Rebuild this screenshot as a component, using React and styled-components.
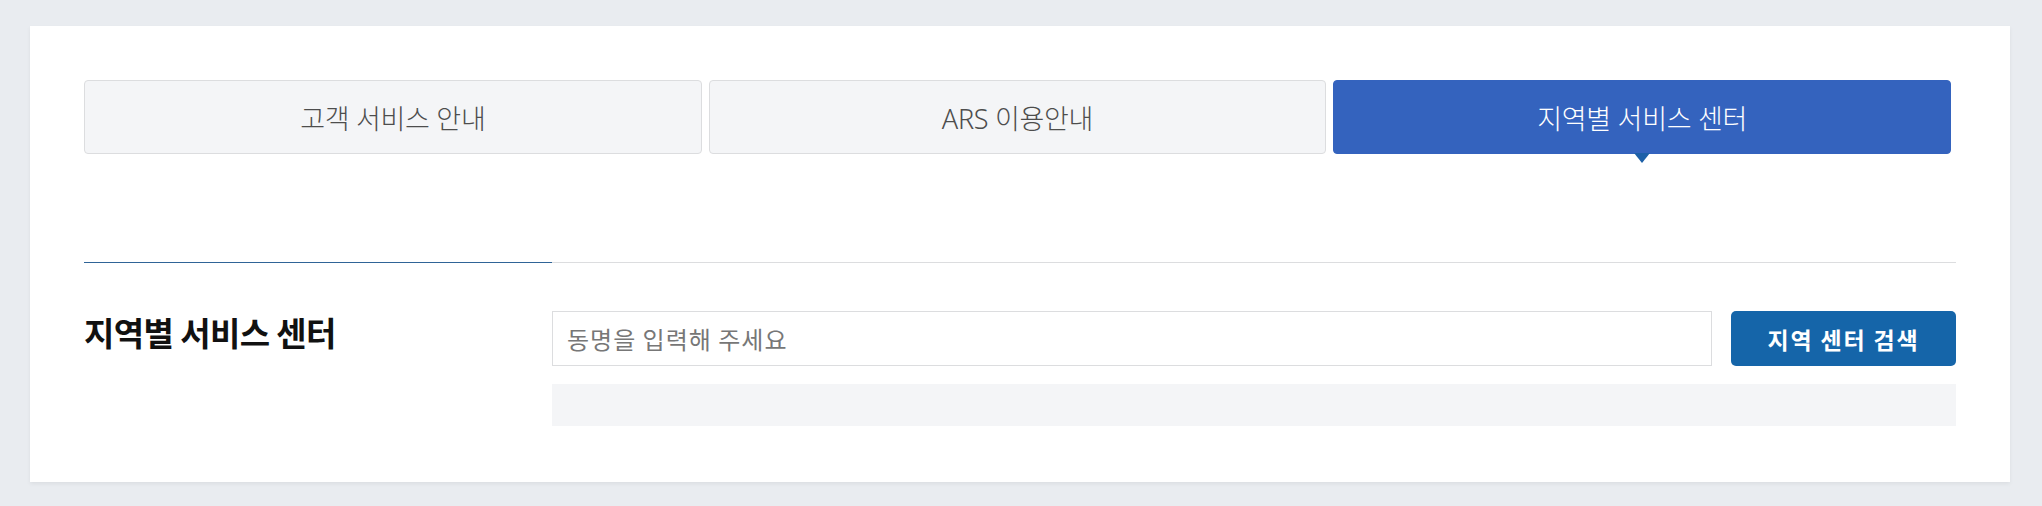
import React, { useState } from 'react'
import styled, { createGlobalStyle } from 'styled-components'

const GlobalStyle = createGlobalStyle`
  html, body {
    margin: 0;
    padding: 0;
    background: #e9ecf0;
    font-family: "Noto Sans", "Noto Sans CJK KR", sans-serif;
  }
  * { box-sizing: border-box; }
`

const Page = styled.div`
  padding: 26px 32px 25px 30px;
`

const Card = styled.section`
  background: #fff;
  padding: 54px 54px 56px 54px;
  box-shadow: 0 2px 4px rgba(0, 0, 0, 0.06);
`

const Tabs = styled.div`
  display: grid;
  grid-template-columns: repeat(3, 1fr);
  gap: 7px;
  margin-right: 5px;
`

const Tab = styled.button`
  position: relative;
  height: 74px;
  border-radius: 4px;
  border: 1px solid ${p => (p.$active ? '#3463be' : '#dcdddf')};
  background: ${p => (p.$active ? '#3463be' : '#f4f5f7')};
  color: ${p => (p.$active ? '#fff' : '#4d4d4d')};
  font-family: "Noto Sans", "Noto Sans CJK KR", sans-serif;
  font-size: 27px;
  font-weight: 300;
  letter-spacing: -0.3px;
  cursor: pointer;

  &::after {
    content: '';
    display: ${p => (p.$active ? 'block' : 'none')};
    position: absolute;
    left: 50%;
    bottom: -10px;
    transform: translateX(-50%);
    border-left: 8px solid transparent;
    border-right: 8px solid transparent;
    border-top: 10px solid #1d60a8;
  }
`

const Section = styled.div`
  display: grid;
  grid-template-columns: 468px 1fr;
  margin-top: 108px;
`

const Side = styled.div`
  border-top: 1px solid #2f6497;
  padding-top: 48px;
`

const Heading = styled.h2`
  margin: 0;
  font-family: "Noto Sans CJK KR", sans-serif;
  font-size: 33px;
  font-weight: 700;
  line-height: 42px;
  letter-spacing: -0.6px;
  color: #111;
`

const Main = styled.div`
  border-top: 1px solid #dcdddf;
  padding-top: 48px;
  display: flex;
  flex-direction: column;
  gap: 18px;
`

const SearchRow = styled.form`
  display: flex;
  gap: 19px;
`

const Input = styled.input`
  flex: 1;
  height: 55px;
  border: 1px solid #dcdddf;
  padding: 0 14px;
  font-family: "Noto Sans CJK KR", sans-serif;
  font-size: 24px;
  letter-spacing: 1px;
  color: #333;
  outline: none;

  &::placeholder {
    color: #777;
  }
`

const SearchButton = styled.button`
  width: 225px;
  height: 55px;
  border: 0;
  border-radius: 5px;
  background: #1565a9;
  color: #fff;
  font-family: "Noto Sans CJK KR", sans-serif;
  font-size: 23px;
  font-weight: 700;
  letter-spacing: 1.8px;
  cursor: pointer;
`

const Results = styled.div`
  height: 42px;
  background: #f4f5f7;
`

const tabs = ['고객 서비스 안내', 'ARS 이용안내', '지역별 서비스 센터']

export default function App() {
  const [active, setActive] = useState(2)
  const [query, setQuery] = useState('')

  return (
    <>
      <GlobalStyle />
      <Page>
        <Card>
          <Tabs>
            {tabs.map((t, i) => (
              <Tab key={t} $active={i === active} onClick={() => setActive(i)}>
                {t}
              </Tab>
            ))}
          </Tabs>

          <Section>
            <Side>
              <Heading>지역별 서비스 센터</Heading>
            </Side>
            <Main>
              <SearchRow onSubmit={e => e.preventDefault()}>
                <Input
                  value={query}
                  onChange={e => setQuery(e.target.value)}
                  placeholder="동명을 입력해 주세요"
                />
                <SearchButton type="submit">지역 센터 검색</SearchButton>
              </SearchRow>
              <Results />
            </Main>
          </Section>
        </Card>
      </Page>
    </>
  )
}
